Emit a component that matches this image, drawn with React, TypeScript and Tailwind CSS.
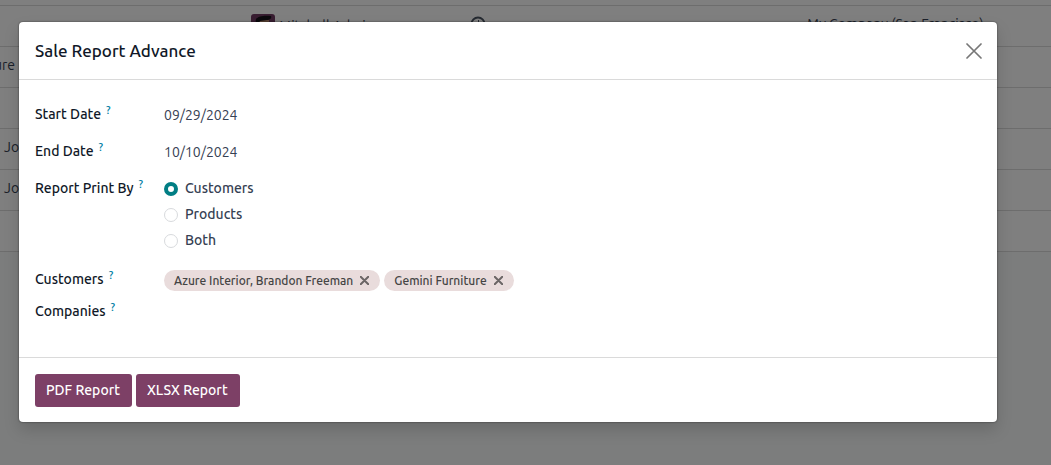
import { useState, type ReactNode } from "react";

type Row = { customer?: string; clipped?: boolean; detail?: boolean };

const rows: Row[] = [
  { detail: true },
  { customer: "ure", clipped: true },
  {},
  { customer: "Jo" },
  { customer: "Jo" },
  {},
];

function Cross({ className, weight }: { className: string; weight: number }) {
  return (
    <svg viewBox="0 0 16 16" className={className} fill="none" stroke="currentColor" strokeWidth={weight} aria-hidden="true">
      <path d="M1 1 15 15M15 1 1 15" strokeLinecap="round" />
    </svg>
  );
}

function Avatar() {
  return (
    <svg viewBox="0 0 24 24" className="size-6 shrink-0" aria-hidden="true">
      <rect width="24" height="24" rx="3" fill="#713b63" />
      <path d="M7 5h11v12a5 5 0 0 1-11 0z" fill="#b98a6c" />
      <path d="M5 5C7 2 14 1 20 2c1 2-1 4-4 4L9 7l-2 4C5 10 4 7 5 5z" fill="#17131a" />
    </svg>
  );
}

function Clock() {
  return (
    <svg viewBox="0 0 16 16" className="size-4" fill="none" stroke="#4b5563" strokeWidth="2" aria-hidden="true">
      <circle cx="8" cy="8" r="6.5" />
      <path d="M8.5 4v5H5.5" strokeWidth="1" />
    </svg>
  );
}

function OrderTable() {
  return (
    <table className="w-full table-fixed border-separate border-spacing-0 text-sm text-gray-700">
      <colgroup>
        <col className="w-[247px]" />
        <col className="w-[223px]" />
        <col className="w-[333px]" />
        <col />
      </colgroup>
      <tbody>
        {rows.map((row, i) => (
          <tr key={i} className="h-[41px] bg-white *:border-b *:border-[#dadada]">
            <td className="pb-1">
              {row.clipped ? (
                <span className="flex w-[15px] justify-end">{row.customer}</span>
              ) : (
                <span className="pl-1">{row.customer}</span>
              )}
            </td>
            <td className="px-1">
              {row.detail && (
                <span className="flex items-center gap-1">
                  <Avatar />
                  Mitchell Admin
                </span>
              )}
            </td>
            <td className="pb-1">{row.detail && <span className="flex"><Clock /></span>}</td>
            <td className="px-1 pb-1">{row.detail && "My Company (San Francisco)"}</td>
          </tr>
        ))}
      </tbody>
    </table>
  );
}

function Help() {
  return <sup className="relative -top-[5px] ml-[5px] text-[11px] leading-none font-medium text-[#0180a5]">?</sup>;
}

function FieldLabel({ htmlFor, children }: { htmlFor: string; children: ReactNode }) {
  return (
    <label htmlFor={htmlFor} className="block text-sm leading-5 font-medium text-gray-900">
      {children}
      <Help />
    </label>
  );
}

function Tag({ name, onRemove }: { name: string; onRemove: () => void }) {
  return (
    <span className="flex h-[21px] items-center gap-[7px] rounded-full bg-[#e9dcdc] pr-[11px] pl-2.5 text-xs font-medium text-[#444]">
      {name}
      <button type="button" aria-label={`Remove ${name}`} onClick={onRemove} className="pb-px text-[#6b6666]">
        <Cross className="size-[9px]" weight={3.5} />
      </button>
    </span>
  );
}

const choices = ["Customers", "Products", "Both"];

export default function App() {
  const [printBy, setPrintBy] = useState("Customers");
  const [tags, setTags] = useState(["Azure Interior, Brandon Freeman", "Gemini Furniture"]);

  return (
    <div className="relative min-h-screen overflow-hidden bg-[#f8fbfa] font-['Ubuntu','Noto_Sans',sans-serif]">
      <div className="border-b border-[#dadada] bg-white pt-[5px]" />
      <OrderTable />
      <div className="absolute inset-0 bg-black/50 pt-[22px] pr-[54px] pl-[19px]">
        <section
          role="dialog"
          aria-labelledby="dialog-title"
          className="rounded bg-white shadow-[0_0_2px_rgba(0,0,0,0.6),0_8px_16px_rgba(0,0,0,0.15)]"
        >
          <header className="flex items-center justify-between border-b border-[#dadada] py-4 pr-[15px] pl-4">
            <h1 id="dialog-title" className="text-[17px] leading-[25px] font-medium text-gray-900">
              Sale Report Advance
            </h1>
            <button type="button" aria-label="Close" className="text-[#777]">
              <Cross className="size-4" weight={1.7} />
            </button>
          </header>
          <form id="report-form" className="grid grid-cols-[129px_1fr] px-4 pt-6 pb-9">
            <div className="h-[37px]"><FieldLabel htmlFor="start">Start Date</FieldLabel></div>
            <input id="start" defaultValue="09/29/2024" className="h-[22px] w-full text-sm text-gray-700 outline-none" />
            <div className="h-[37px]"><FieldLabel htmlFor="end">End Date</FieldLabel></div>
            <input id="end" defaultValue="10/10/2024" className="h-[22px] w-full text-sm text-gray-700 outline-none" />
            <div className="h-[91px]"><FieldLabel htmlFor="by-Customers">Report Print By</FieldLabel></div>
            <div className="flex flex-col gap-1.5">
              {choices.map((c) => (
                <label key={c} className="flex items-end gap-[7px] text-sm leading-5 font-medium text-gray-700">
                  <input
                    id={`by-${c}`}
                    type="radio"
                    name="printBy"
                    checked={printBy === c}
                    onChange={() => setPrintBy(c)}
                    className="mb-0.5 size-[14px] appearance-none rounded-full border border-[#d8dadd] bg-white checked:border-4 checked:border-[#017e84]"
                  />
                  {c}
                </label>
              ))}
            </div>
            <div className="h-8"><FieldLabel htmlFor="customers">Customers</FieldLabel></div>
            <div className="flex items-start gap-1 pt-px">
              {tags.map((t) => (
                <Tag key={t} name={t} onRemove={() => setTags(tags.filter((x) => x !== t))} />
              ))}
              <input id="customers" className="h-5 min-w-0 flex-1 text-sm outline-none" />
            </div>
            <div className="h-5"><FieldLabel htmlFor="companies">Companies</FieldLabel></div>
            <input id="companies" className="h-5 w-full text-sm outline-none" />
          </form>
          <footer className="flex gap-1 border-t border-[#dadada] px-4 pt-4 pb-[15px] text-sm font-medium text-white">
            <button type="button" className="h-[33px] rounded-[3px] bg-[#7d4066] pr-3 pb-px pl-[11px]">PDF Report</button>
            <button type="button" className="h-[33px] rounded-[3px] bg-[#7d4066] pr-3 pb-px pl-[11px]">XLSX Report</button>
          </footer>
        </section>
      </div>
    </div>
  );
}
